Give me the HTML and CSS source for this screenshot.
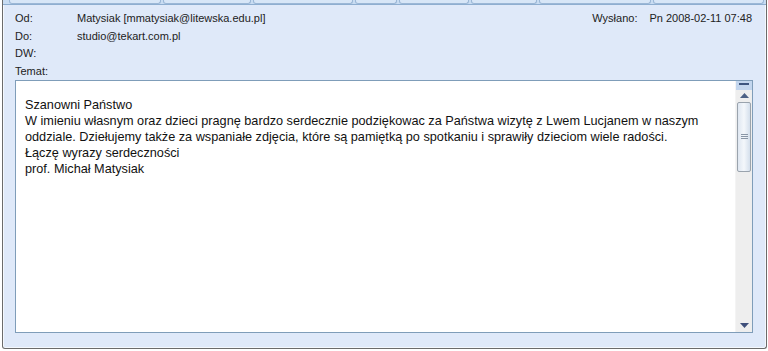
FILE: index.html
```html
<!DOCTYPE html>
<html lang="pl">
<head>
    <meta charset="UTF-8">
    <title>Wiadomość</title>
    <link rel="stylesheet" href="styles.css">
</head>
<body>
    <div class="window">
        <div class="toolbar">
            <div class="tb-btn" style="width: 150px"></div>
            <div class="tb-btn" style="width: 86px"></div>
            <div class="tb-btn" style="width: 98px"></div>
            <div class="tb-btn" style="width: 40px"></div>
            <div class="tb-btn" style="width: 68px"></div>
            <div class="tb-btn" style="width: 64px"></div>
            <div class="tb-btn" style="width: 110px"></div>
            <div class="tb-btn tb-last"></div>
        </div>

        <div class="header">
            <div class="row">
                <span class="label">Od:</span>
                <span class="value">Matysiak [mmatysiak@litewska.edu.pl]</span>
                <span class="sent"><span class="sent-label">Wysłano:</span>Pn 2008-02-11 07:48</span>
            </div>
            <div class="row">
                <span class="label">Do:</span>
                <span class="value">studio@tekart.com.pl</span>
            </div>
            <div class="row">
                <span class="label">DW:</span>
                <span class="value"></span>
            </div>
            <div class="row">
                <span class="label">Temat:</span>
                <span class="value"></span>
            </div>
        </div>

        <div class="message">
            <div class="content">
                Szanowni Państwo<br>
                W imieniu własnym oraz dzieci pragnę bardzo serdecznie podziękowac za Państwa wizytę z Lwem Lucjanem w naszym<br>
                oddziale. Dziełujemy także za wspaniałe zdjęcia, które są pamiętką po spotkaniu i sprawiły dzieciom wiele radości.<br>
                Łączę wyrazy serdeczności<br>
                prof. Michał Matysiak
            </div>
            <div class="scrollbar">
                <div class="sb-top"><span></span></div>
                <div class="sb-arrow">
                    <svg width="9" height="5" viewBox="0 0 9 5"><path d="M0 5 L4.5 0 L9 5 Z" fill="#4d6185"/></svg>
                </div>
                <div class="sb-thumb">
                    <span class="grip"></span>
                </div>
                <div class="sb-track"></div>
                <div class="sb-arrow">
                    <svg width="9" height="5" viewBox="0 0 9 5"><path d="M0 0 L9 0 L4.5 5 Z" fill="#3f4f7a"/></svg>
                </div>
            </div>
        </div>
    </div>
</body>
</html>
```

FILE: styles.css
```css
/* General */
body {
    margin: 0;
    padding: 0;
    background-color: #ffffff;
    font-family: 'Liberation Sans', Arial, sans-serif;
    color: #1a1a1a;
}

/* Window frame */
.window {
    margin: 0 1px 0 2px;
    height: 348px;
    border-left: 1px solid #6b6b6b;
    border-right: 1px solid #6b6b6b;
    border-bottom: 1px solid #6b6b6b;
    border-bottom-left-radius: 3px;
    border-bottom-right-radius: 3px;
    background-color: #dfe9f9;
    box-shadow: inset 1px 0 0 #f4f8fd, inset -1px 0 0 #f4f8fd, inset 0 -1px 0 #f4f8fd;
    display: flex;
    flex-direction: column;
}

/* Toolbar strip at the top */
.toolbar {
    display: flex;
    height: 4px;
    padding: 0 2px 0 6px;
    gap: 2px;
    border-bottom: 1px solid #8eaed0;
    background-color: #c8dcf2;
}

.tb-btn {
    height: 3px;
    background-color: #d7e6f7;
    border: 1px solid #9bb7d6;
    border-top: none;
    border-radius: 0 0 3px 3px;
}

.tb-last {
    flex: 1;
}

/* Header */
.header {
    padding: 4px 14px 0 12px;
    font-family: 'Liberation Sans', Tahoma, sans-serif;
    font-size: 11px;
    color: #222;
}

.row {
    display: flex;
    align-items: center;
    height: 17.7px;
}

.label {
    width: 62px;
}

.value {
    flex: 1;
}

.sent-label {
    margin-right: 12px;
}

/* Message body */
.message {
    display: flex;
    margin: 0 13px 0 12px;
    height: 251px;
    border: 1px solid #7f9db9;
    background-color: #ffffff;
}

.content {
    flex: 1;
    padding: 16px 0 0 9px;
    font-size: 12.7px;
    line-height: 16px;
    color: #111;
    white-space: nowrap;
}

/* Scrollbar */
.scrollbar {
    width: 16px;
    display: flex;
    flex-direction: column;
    background-color: #eeeeee;
    border-left: 1px solid #f4f4f4;
}

.sb-top {
    height: 9px;
    background-color: #c3d6ee;
    display: flex;
    justify-content: center;
    padding-top: 2px;
    box-sizing: border-box;
}

.sb-top span {
    width: 10px;
    height: 2px;
    background-color: #3d557f;
}

.sb-arrow {
    height: 12px;
    display: flex;
    align-items: center;
    justify-content: center;
}

.sb-thumb {
    margin: 0 1px;
    height: 68px;
    border: 1px solid #9aa3ad;
    border-radius: 2px;
    background: linear-gradient(to right, #dfe7f1, #f4f7fb 50%, #d4dfec);
    display: flex;
    align-items: center;
    justify-content: center;
}

.grip {
    width: 7px;
    height: 5px;
    border-top: 1px solid #8a96a6;
    border-bottom: 1px solid #8a96a6;
    box-sizing: border-box;
    position: relative;
}

.grip::after {
    content: '';
    position: absolute;
    left: 0;
    right: 0;
    top: 1px;
    height: 1px;
    background-color: #8a96a6;
}

.sb-track {
    flex: 1;
}
```
